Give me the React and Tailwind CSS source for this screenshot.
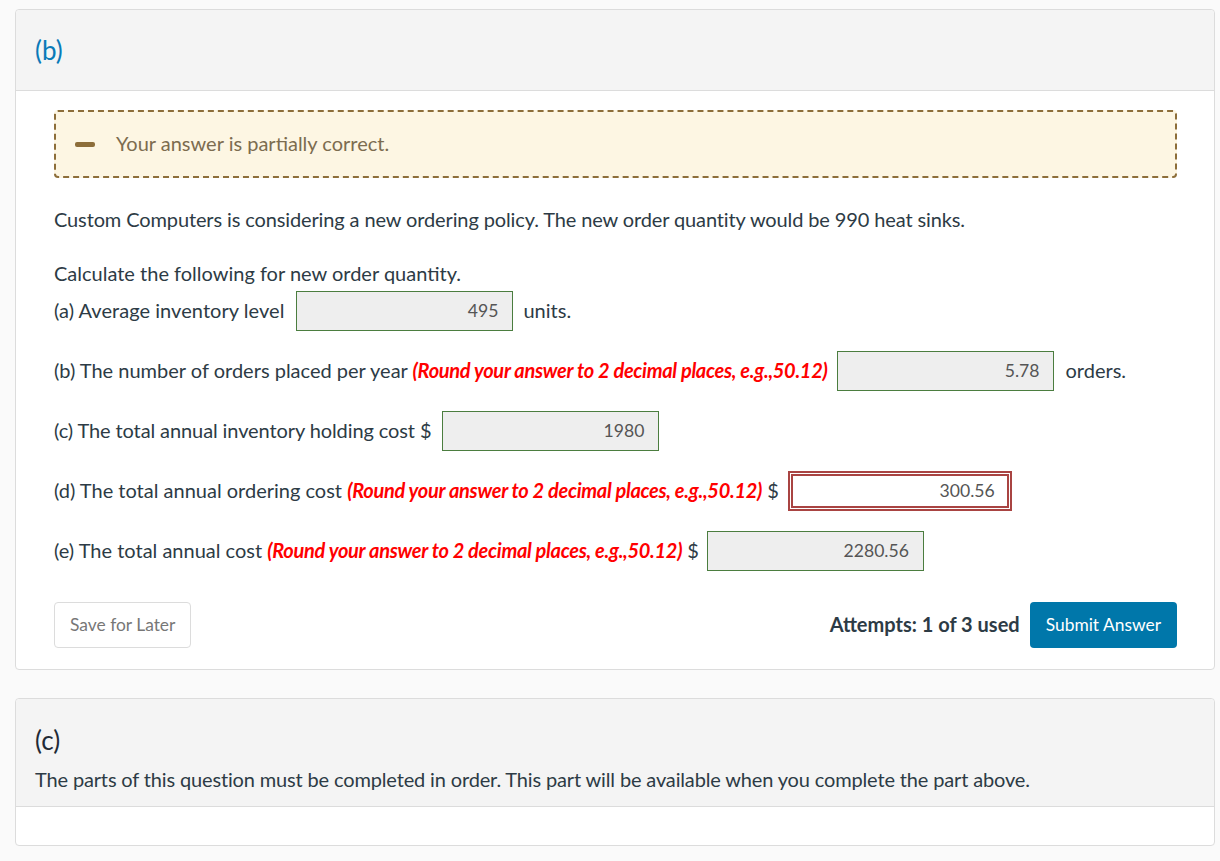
import React from "react";

const font = { fontFamily: "Lato, 'Noto Sans', sans-serif" };

function Input({ value }) {
  return (
    <div className="w-[217px] h-[40px] border border-[#4b7d3f] bg-[#eeeeee] flex items-center justify-end pr-[14px] text-[17.6px] text-[#555]">
      {value}
    </div>
  );
}

function Red({ children }) {
  return <span className="text-[#ff0000] font-bold italic tracking-[-0.3px]">{children}</span>;
}

export default function App() {
  return (
    <div style={font} className="min-h-[861px] bg-[#fafafa] pt-[9px] pl-[15px] pr-[5px] text-[20px] text-[#2d3b45]">
      <div className="bg-white border border-[#dcdcdc] rounded-[4px]">
        <div className="h-[81px] bg-[#f4f4f4] border-b border-[#dcdcdc] rounded-t-[4px] flex items-center pl-[19px] text-[26px] text-[#0a7ab8]">
          (b)
        </div>
        <div className="pl-[38px] pr-[37px] pt-[19px] pb-[21px]">
          <div className="h-[68px] border-2 border-dashed border-[#8d6e3a] bg-[#fdf6e3] rounded-[4px] flex items-center pl-[19px]">
            <div className="w-[20px] h-[5px] bg-[#8d6e3a] rounded-[2px]" />
            <span className="ml-[21px] text-[#7c6c4f] leading-[28px] pb-[3px]">Your answer is partially correct.</span>
          </div>
          <p className="mt-[26px] leading-[30px] tracking-[-0.12px]">
            Custom Computers is considering a new ordering policy. The new order quantity would be 990 heat sinks.
          </p>
          <p className="mt-[24px] leading-[30px]">Calculate the following for new order quantity.</p>
          <div className="mt-[3px] flex items-center h-[40px]">
            <span className="pb-[2px] tracking-[0.05px]">(a) Average inventory level</span>
            <div className="ml-[12px]"><Input value="495" /></div>
            <span className="ml-[10px] pb-[2px]">units.</span>
          </div>
          <div className="mt-[20px] flex items-center h-[40px]">
            <span className="pb-[2px]">
              (b) The number of orders placed per year <Red>(Round your answer to 2 decimal places, e.g.,50.12)</Red>
            </span>
            <div className="ml-[10px]"><Input value="5.78" /></div>
            <span className="ml-[11px] pb-[2px]">orders.</span>
          </div>
          <div className="mt-[20px] flex items-center h-[40px]">
            <span className="pb-[2px] tracking-[-0.1px]">(c) The total annual inventory holding cost $</span>
            <div className="ml-[11px]"><Input value="1980" /></div>
          </div>
          <div className="mt-[20px] flex items-center h-[40px]">
            <span className="pb-[2px]">
              (d) The total annual ordering cost <Red>(Round your answer to 2 decimal places, e.g.,50.12)</Red> $
            </span>
            <div className="ml-[9px] w-[224px] h-[40px] border-[5px] border-double border-[#a94442] bg-white flex items-center justify-end pr-[12px] text-[17.6px] text-[#555]">
              300.56
            </div>
          </div>
          <div className="mt-[20px] flex items-center h-[40px]">
            <span className="pb-[2px]">
              (e) The total annual cost <Red>(Round your answer to 2 decimal places, e.g.,50.12)</Red> $
            </span>
            <div className="ml-[8px]"><Input value="2280.56" /></div>
          </div>
          <div className="mt-[31px] flex items-center justify-between">
            <button className="h-[46px] px-[15px] border border-[#dcdcdc] rounded-[4px] bg-white text-[17.4px] text-[#777]">
              Save for Later
            </button>
            <div className="flex items-center">
              <span className="font-bold text-[#2d3b45] pb-[2px]">Attempts: 1 of 3 used</span>
              <button className="ml-[10px] h-[46px] px-[16px] rounded-[4px] bg-[#0077aa] text-white text-[17.4px]">
                Submit Answer
              </button>
            </div>
          </div>
        </div>
      </div>

      <div className="mt-[28px] bg-white border border-[#dcdcdc] rounded-[4px]">
        <div className="bg-[#f4f4f4] border-b border-[#dcdcdc] rounded-t-[4px] pl-[19px] pt-[26px] pb-[12px]">
          <div className="text-[26px] leading-[31px] text-[#1f2a36]">(c)</div>
          <p className="mt-[8px] leading-[30px] tracking-[-0.15px]">
            The parts of this question must be completed in order. This part will be available when you complete the part above.
          </p>
        </div>
        <div className="h-[38px]" />
      </div>
    </div>
  );
}
